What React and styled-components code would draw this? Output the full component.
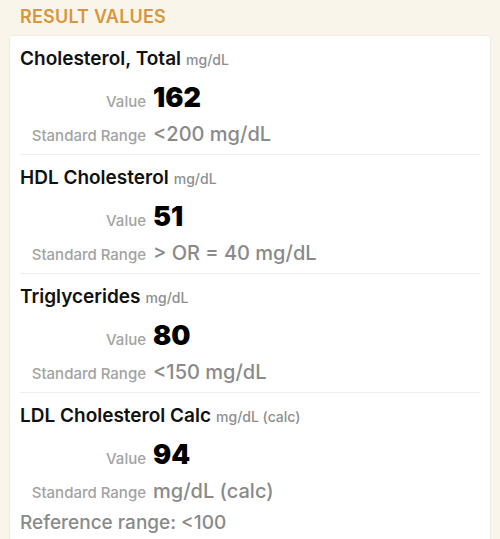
import React from "react";
import styled, { createGlobalStyle } from "styled-components";

const Global = createGlobalStyle`
  html, body { margin: 0; padding: 0; background: #f9f5eb; }
  body { font-family: Inter, "Noto Sans", "Liberation Sans", sans-serif; -webkit-font-smoothing: antialiased; }
`;

const Page = styled.div`
  padding: 0 10px;
  height: 539px;
  overflow: hidden;
`;

const Header = styled.h2`
  margin: 0;
  padding: 6px 10px 0;
  height: 36px;
  box-sizing: border-box;
  font-size: 18px;
  font-weight: 600;
  letter-spacing: 0.2px;
  color: #d9963c;
  text-transform: uppercase;
  line-height: 22px;
`;

const Card = styled.div`
  background: #ffffff;
  border-radius: 2px;
  box-shadow: 0 0 2px rgba(120, 100, 60, 0.18);
  padding: 0 10px 20px;
`;

const Row = styled.div`
  padding: 11px 0 8px;
  border-bottom: ${(p) => (p.$last ? "none" : "1px solid #eeeeee")};
`;

const Title = styled.div`
  line-height: 24px;
  font-size: 19px;
  font-weight: 600;
  color: #111;
`;

const Unit = styled.span`
  font-size: 14px;
  font-weight: 500;
  color: #8e8e8e;
  margin-left: 5px;
`;

const Grid = styled.div`
  display: grid;
  grid-template-columns: 126px auto;
  column-gap: 7px;
  align-items: baseline;
  margin-top: 10px;
`;

const Label = styled.div`
  text-align: right;
  font-size: 15px;
  font-weight: 500;
  color: #a3a3a3;
`;

const BigValue = styled.div`
  font-size: 27px;
  font-weight: 900;
  line-height: 32px;
  color: #000;
`;

const RangeValue = styled.div`
  font-size: 20px;
  font-weight: 500;
  line-height: 24px;
  color: #8a8a8a;
  margin-top: 8px;
`;

const Reference = styled.div`
  font-size: 19px;
  font-weight: 500;
  line-height: 24px;
  color: #8a8a8a;
  margin-top: 8px;
`;

const items = [
  { name: "Cholesterol, Total", unit: "mg/dL", value: "162", range: "<200 mg/dL" },
  { name: "HDL Cholesterol", unit: "mg/dL", value: "51", range: "> OR = 40 mg/dL" },
  { name: "Triglycerides", unit: "mg/dL", value: "80", range: "<150 mg/dL" },
  { name: "LDL Cholesterol Calc", unit: "mg/dL (calc)", value: "94", range: "mg/dL (calc)", ref: "Reference range: <100" },
];

export default function App() {
  return (
    <>
      <Global />
      <Page>
        <Header>Result Values</Header>
        <Card>
          {items.map((it, i) => (
            <Row key={it.name} $last={i === items.length - 1}>
              <Title>
                {it.name}
                <Unit>{it.unit}</Unit>
              </Title>
              <Grid>
                <Label>Value</Label>
                <BigValue>{it.value}</BigValue>
                <Label>Standard Range</Label>
                <RangeValue>{it.range}</RangeValue>
              </Grid>
              {it.ref && <Reference>{it.ref}</Reference>}
            </Row>
          ))}
        </Card>
      </Page>
    </>
  );
}
